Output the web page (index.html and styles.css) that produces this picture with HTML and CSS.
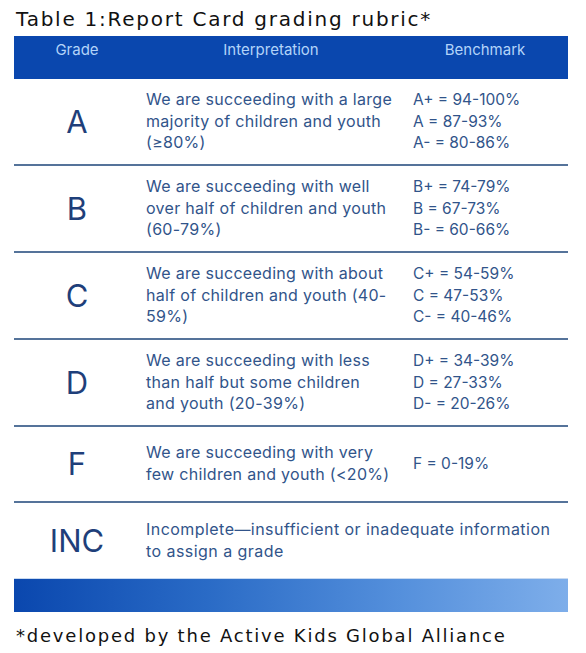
FILE: index.html
```html
<!DOCTYPE html>
<html lang="en">
<head>
<meta charset="utf-8">
<title>Report Card grading rubric</title>
<link rel="stylesheet" href="styles.css">
</head>
<body>
<div class="page">
  <h1 class="title">Table 1:Report Card grading rubric*</h1>
  <div class="rubric">
    <div class="head">
      <div class="h-grade">Grade</div>
      <div class="h-interp">Interpretation</div>
      <div class="h-bench">Benchmark</div>
    </div>
    <div class="row">
      <div class="grade">A</div>
      <div class="interp">We are succeeding with a large<br>majority of children and youth<br>(≥80%)</div>
      <div class="bench"><span>A+ = 94-100%</span><span>A = 87-93%</span><span>A- = 80-86%</span></div>
    </div>
    <div class="row">
      <div class="grade">B</div>
      <div class="interp">We are succeeding with well<br>over half of children and youth<br>(60-79%)</div>
      <div class="bench"><span>B+ = 74-79%</span><span>B = 67-73%</span><span>B- = 60-66%</span></div>
    </div>
    <div class="row">
      <div class="grade">C</div>
      <div class="interp">We are succeeding with about<br>half of children and youth (40-<br>59%)</div>
      <div class="bench"><span>C+ = 54-59%</span><span>C = 47-53%</span><span>C- = 40-46%</span></div>
    </div>
    <div class="row">
      <div class="grade">D</div>
      <div class="interp">We are succeeding with less<br>than half but some children<br>and youth (20-39%)</div>
      <div class="bench"><span>D+ = 34-39%</span><span>D = 27-33%</span><span>D- = 20-26%</span></div>
    </div>
    <div class="row row-short">
      <div class="grade">F</div>
      <div class="interp">We are succeeding with very<br>few children and youth (&lt;20%)</div>
      <div class="bench"><span>F = 0-19%</span></div>
    </div>
    <div class="row row-last">
      <div class="grade">INC</div>
      <div class="interp interp-wide">Incomplete—insufficient or inadequate information<br>to assign a grade</div>
    </div>
    <div class="bar"></div>
  </div>
  <p class="note">*developed by the Active Kids Global Alliance</p>
</div>
</body>
</html>
```
FILE: styles.css
```css
html, body {
  margin: 0;
  padding: 0;
  background: #ffffff;
}

.page {
  width: 586px;
  padding: 0 18px 0 14px;
  box-sizing: border-box;
}

.title {
  margin: 0;
  padding: 7px 0 0 2px;
  height: 36px;
  box-sizing: border-box;
  font-family: "DejaVu Sans", sans-serif;
  font-weight: normal;
  font-size: 20px;
  line-height: 24px;
  letter-spacing: 1.75px;
  color: #111111;
  white-space: nowrap;
}

.rubric {
  display: flex;
  flex-direction: column;
  font-family: "Inter", "Noto Sans", sans-serif;
}

.head {
  display: grid;
  grid-template-columns: 126px 262px 1fr;
  height: 43px;
  background: #0a47ae;
  color: #b3d4f9;
  font-size: 15px;
  line-height: 28px;
}

.head > div {
  text-align: center;
}

.row {
  display: grid;
  grid-template-columns: 126px 262px 1fr;
  height: 87px;
  box-sizing: border-box;
  border-bottom: 2px solid #55739a;
  align-items: center;
  color: #31548a;
  font-size: 16px;
  line-height: 21.7px;
}

.row-short {
  height: 76px;
}

.row-last {
  height: 75px;
  border-bottom: none;
}

.grade {
  text-align: center;
  font-size: 31px;
  line-height: 40px;
  color: #1f3f7a;
}

.interp {
  padding: 0 0 0 6px;
  letter-spacing: 0.3px;
  white-space: nowrap;
}

.interp-wide {
  grid-column: 2 / 4;
  letter-spacing: 0.45px;
}

.bench {
  display: flex;
  flex-direction: column;
  padding-left: 11px;
  font-size: 15.5px;
}

.bar {
  height: 34px;
  background: linear-gradient(90deg, #0a47ae 0%, #2a6bc6 35%, #5590dc 70%, #7eaeea 100%);
  border-top: 1px solid #c9daf0;
  box-sizing: border-box;
}

.note {
  margin: 0;
  padding: 13px 0 0 2px;
  font-family: "DejaVu Sans", sans-serif;
  font-size: 18px;
  line-height: 22px;
  letter-spacing: 1.78px;
  color: #111111;
  white-space: nowrap;
}
```
